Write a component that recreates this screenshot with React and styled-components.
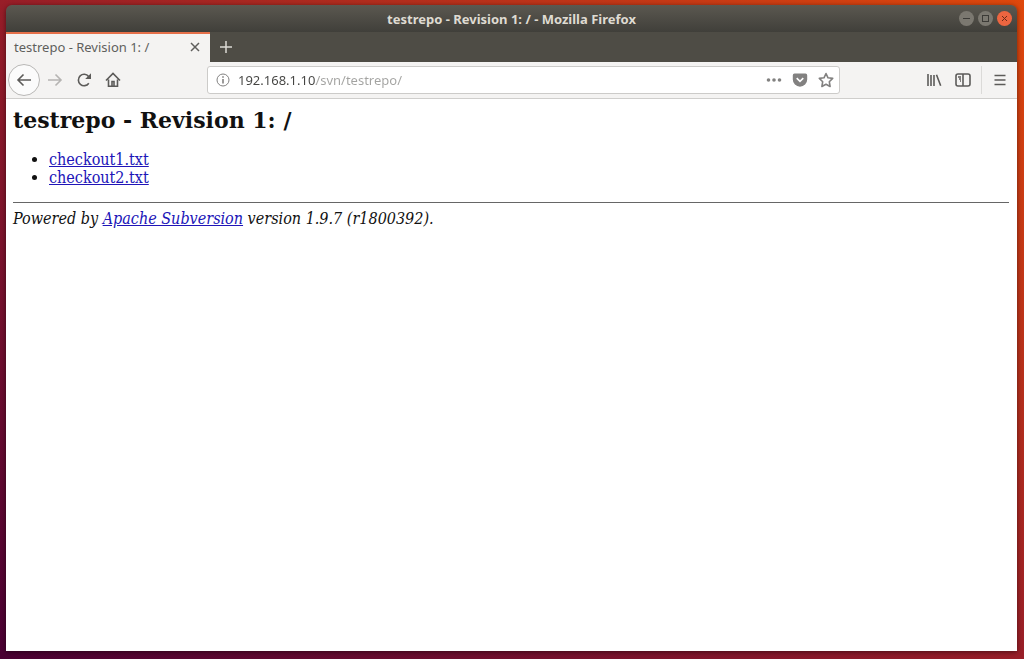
import { useState } from 'react';
import styled, { createGlobalStyle } from 'styled-components';

const files = ['checkout1.txt', 'checkout2.txt'];

const App = () => {
  const [url, setUrl] = useState('192.168.1.10/svn/testrepo/');

  return (
    <Desktop>
      <GlobalStyle />
      <Window>
        <TitleBar>
          <WindowTitle>testrepo - Revision 1: / - Mozilla Firefox</WindowTitle>
          <WindowButtons>
            <WindowButton type="button" aria-label="Minimize">
              <svg width="15" height="15" viewBox="0 0 15 15">
                <path d="M4 7.5h7" />
              </svg>
            </WindowButton>
            <WindowButton type="button" aria-label="Maximize">
              <svg width="15" height="15" viewBox="0 0 15 15">
                <rect x="4.5" y="4.5" width="6" height="6" />
              </svg>
            </WindowButton>
            <WindowButton type="button" aria-label="Close" $close>
              <svg width="15" height="15" viewBox="0 0 15 15">
                <path d="M5 5l5 5M10 5l-5 5" />
              </svg>
            </WindowButton>
          </WindowButtons>
        </TitleBar>

        <TabBar>
          <Tab>
            <TabLabel>testrepo - Revision 1: /</TabLabel>
            <TabClose type="button" aria-label="Close tab">
              <svg width="10" height="10" viewBox="0 0 10 10">
                <path d="M1 1l8 8M9 1L1 9" />
              </svg>
            </TabClose>
          </Tab>
          <NewTab type="button" aria-label="New tab">
            <svg width="14" height="14" viewBox="0 0 14 14">
              <path d="M7 1v12M1 7h12" />
            </svg>
          </NewTab>
        </TabBar>

        <Toolbar>
          <NavButtons>
            <BackButton type="button" aria-label="Back">
              <svg width="16" height="16" viewBox="0 0 16 16">
                <path d="M15 8H2M7.5 2.5L2 8l5.5 5.5" />
              </svg>
            </BackButton>
            <ToolButton type="button" aria-label="Forward" disabled>
              <svg width="16" height="16" viewBox="0 0 16 16">
                <path d="M1 8h13M8.5 2.5L14 8l-5.5 5.5" />
              </svg>
            </ToolButton>
            <ToolButton type="button" aria-label="Reload">
              <svg width="16" height="16" viewBox="0 0 16 16">
                <path d="M12.800 11.200A5.700 5.700 0 1 1 12.600 4.500" />
                <path d="M15 1.200v5.800H9.200z" fill="currentColor" stroke="none" />
              </svg>
            </ToolButton>
            <ToolButton type="button" aria-label="Home">
              <svg width="16" height="16" viewBox="0 0 16 16">
                <path d="M1 8.500L8 1.500l7 7M3.500 7.500V14.200h9V7.500" />
                <path d="M7 14V9.500h2V14" />
              </svg>
            </ToolButton>
          </NavButtons>

          <UrlBar>
            <UrlButton type="button" aria-label="Site information">
              <svg width="14" height="14" viewBox="0 0 14 14">
                <circle cx="7" cy="7" r="6" />
                <path d="M7 6v4.500M7 3.300v1.400" />
              </svg>
            </UrlButton>
            <UrlInput
              type="text"
              aria-label="Address"
              spellCheck={false}
              value={url}
              onChange={(e) => setUrl(e.target.value)}
            />
            <UrlActions>
              <UrlButton type="button" aria-label="Page actions">
                <svg width="16" height="16" viewBox="0 0 16 16">
                  <g fill="currentColor" stroke="none">
                    <circle cx="2.500" cy="8" r="1.800" />
                    <circle cx="8" cy="8" r="1.800" />
                    <circle cx="13.500" cy="8" r="1.800" />
                  </g>
                </svg>
              </UrlButton>
              <UrlButton type="button" aria-label="Save to Pocket">
                <svg width="16" height="16" viewBox="0 0 16 16">
                  <path
                    d="M2.500 1.500h11a1.700 1.700 0 0 1 1.700 1.700v4.300a7.200 7.200 0 0 1-14.400 0V3.200a1.700 1.700 0 0 1 1.700-1.700z"
                    fill="currentColor"
                    stroke="none"
                  />
                  <path d="M4.700 6.200L8 9.300l3.300-3.100" stroke="#fff" />
                </svg>
              </UrlButton>
              <UrlButton type="button" aria-label="Bookmark this page">
                <svg width="16" height="16" viewBox="0 0 16 16">
                  <path
                    d="M8 1.500l2 4.300 4.700.6-3.400 3.300.8 4.800L8 12.200l-4.100 2.300.8-4.800L1.300 6.400 6 5.800z"
                    strokeLinejoin="round"
                  />
                </svg>
              </UrlButton>
            </UrlActions>
          </UrlBar>

          <EndButtons>
            <ToolButton type="button" aria-label="Library">
              <svg width="16" height="16" viewBox="0 0 16 16">
                <path d="M2 2v12M5 3v11M8 3v11M10.500 2.700l4.200 11" />
              </svg>
            </ToolButton>
            <ToolButton type="button" aria-label="Sidebars">
              <svg width="16" height="16" viewBox="0 0 16 16">
                <rect x="1" y="2" width="14" height="12" rx="2" />
                <path d="M8 2v12" />
                <path d="M3 5h3M4 7h2M5 9h1" />
              </svg>
            </ToolButton>
            <MenuButton type="button" aria-label="Open menu">
              <svg width="14" height="14" viewBox="0 0 14 14">
                <path d="M1.500 2.500h11M1.500 7h11M1.500 11.500h11" />
              </svg>
            </MenuButton>
          </EndButtons>
        </Toolbar>

        <Page>
          <h2>testrepo - Revision 1: /</h2>
          <ul>
            {files.map((file) => (
              <li key={file}>
                <a href={`#${file}`}>{file}</a>
              </li>
            ))}
          </ul>
          <hr />
          <em>
            Powered by <a href="#subversion">Apache Subversion</a> version 1.9.7
            (r1800392).
          </em>
        </Page>
      </Window>
    </Desktop>
  );
};

const GlobalStyle = createGlobalStyle`
  * {
    box-sizing: border-box;
  }
  body {
    margin: 0;
  }
  button {
    display: flex;
    align-items: center;
    justify-content: center;
    flex-shrink: 0;
    padding: 0;
    border: none;
    background: none;
    color: inherit;
  }
  svg {
    display: block;
    fill: none;
    stroke: currentColor;
  }
`;

const Desktop = styled.div`
  display: flex;
  min-height: 100vh;
  padding: 5px 7px 8px 6px;
  font-family: 'Noto Sans', 'Open Sans', sans-serif;
  background: linear-gradient(to top right, #4a0033, #981e28 50%, #df480c);
`;

const Window = styled.div`
  display: flex;
  flex: 1;
  flex-direction: column;
  min-width: 0;
  border-radius: 6px 6px 0 0;
  box-shadow: 0 1px 5px rgba(0, 0, 0, 0.5);
  overflow: hidden;
`;

const TitleBar = styled.div`
  display: grid;
  grid-template-columns: 1fr auto 1fr;
  align-items: center;
  height: 27px;
  padding: 0 5px;
  color: #dfdbd2;
  background: linear-gradient(#5b5850, #403f3a);
`;

const WindowTitle = styled.div`
  grid-column: 2;
  font-size: 13px;
  font-weight: 700;
  white-space: nowrap;
`;

const WindowButtons = styled.div`
  display: flex;
  justify-content: flex-end;
  gap: 4px;
`;

const WindowButton = styled.button`
  width: 15px;
  height: 15px;
  border-radius: 50%;
  color: ${(props) => (props.$close ? '#6b2c18' : '#3c3b37')};
  background: ${(props) => (props.$close ? '#ec6540' : '#7b7870')};
`;

const TabBar = styled.div`
  display: flex;
  height: 30px;
  background: #4e4c45;
`;

const Tab = styled.div`
  display: flex;
  align-items: center;
  justify-content: space-between;
  width: 204px;
  padding: 0 10px 2px 8px;
  border-top: 2px solid #e5704a;
  color: #5f5f5d;
  background: #f4f3f2;
`;

const TabLabel = styled.span`
  font-size: 13px;
  white-space: nowrap;
`;

const TabClose = styled.button`
  width: 10px;
  height: 10px;
  svg {
    stroke-width: 1.5;
  }
`;

const NewTab = styled.button`
  width: 32px;
  color: #dcdad5;
  svg {
    stroke-width: 1.5;
  }
`;

const Toolbar = styled.div`
  display: flex;
  align-items: center;
  height: 37px;
  border-bottom: 1px solid #cfcecc;
  color: #5c5b59;
  background: #f4f3f2;
  svg {
    stroke-width: 1.6;
  }
`;

const NavButtons = styled.div`
  display: flex;
  align-items: center;
  gap: 1px;
  padding-left: 2px;
`;

const ToolButton = styled.button`
  width: 28px;
  height: 28px;
  color: ${(props) => (props.disabled ? '#b5b4b2' : 'inherit')};
`;

const BackButton = styled(ToolButton)`
  width: 32px;
  height: 32px;
  border: 1px solid #b9b8b6;
  border-radius: 50%;
  background: #fbfbfb;
`;

const UrlBar = styled.div`
  display: flex;
  flex: 1;
  align-items: center;
  height: 28px;
  margin: 0 80px;
  padding: 0 5px 0 8px;
  border: 1px solid #cccbc9;
  border-radius: 3px;
  color: #828180;
  background: #fff;
`;

const UrlInput = styled.input`
  flex: 1;
  min-width: 0;
  padding: 0 0 0 8px;
  border: none;
  outline: none;
  font-family: inherit;
  font-size: 13px;
  color: transparent;
  caret-color: #3e3e3c;
  /* the host part is darker than the path */
  background: linear-gradient(to right, #444442 86px, #a3a3a1 86px);
  background-clip: text;
`;

const UrlActions = styled.div`
  display: flex;
  gap: 10px;
`;

const UrlButton = styled.button`
  circle {
    stroke-width: 1;
  }
`;

const EndButtons = styled.div`
  display: flex;
  align-items: center;
  gap: 1px;
`;

const MenuButton = styled(ToolButton)`
  width: 36px;
  margin-left: 3px;
  border-left: 1px solid #dbdad8;
`;

const Page = styled.main`
  flex: 1;
  padding: 8px 8px 8px 7px;
  font-family: 'DejaVu Serif Condensed', 'DejaVu Serif', serif;
  font-size: 16px;
  line-height: 18px;
  color: #111;
  background: #fff;
  h2 {
    margin: 0 0 18px;
    font-family: 'DejaVu Serif', serif;
    font-size: 22px;
    line-height: 26px;
  }
  ul {
    margin: 0 0 15px;
    padding-left: 36px;
  }
  hr {
    margin: 0 0 7px;
    border: none;
    border-top: 1px solid #666;
  }
  a {
    color: #2015b8;
  }
`;

export default App;
